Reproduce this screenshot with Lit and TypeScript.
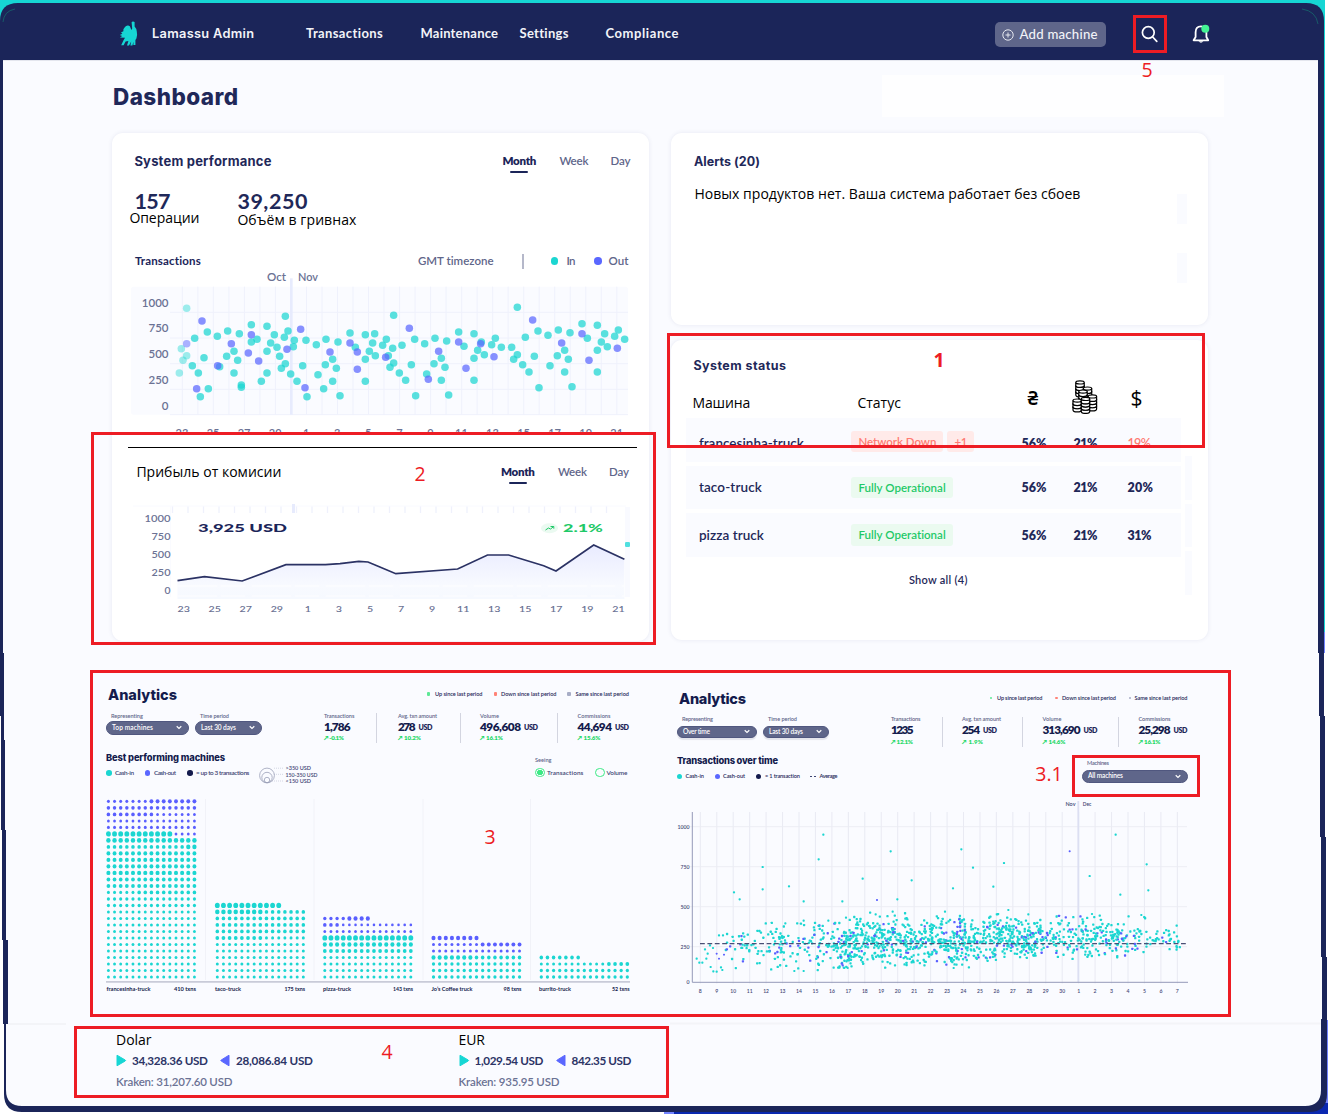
import { LitElement, html, svg, css } from 'lit';
import { customElement, property } from 'lit/decorators.js';

/* Text label whose letter spacing is tuned so that it fills a given width. */
@customElement('fit-text')
class FitText extends LitElement {
  @property() text = '';
  @property({ type: Number }) w = 0;
  static styles = css`
    :host { display: block; line-height: 1.2; white-space: nowrap; }
    span { display: inline-block; }
  `;
  render() { return html`<span>${this.text}</span>`; }
  updated() {
    const s = this.renderRoot.querySelector('span') as HTMLElement;
    this.style.width = this.w + 'px';
    s.style.letterSpacing = '0px';
    const n = this.text.length;
    const gap = (this.w - s.getBoundingClientRect().width) / Math.max(1, n - 1);
    s.style.letterSpacing = gap.toFixed(3) + 'px';
  }
}
const t = (text: string, w: number, cls = '') => html`<fit-text class=${cls} .w=${w} .text=${text}></fit-text>`;

const st = (x: number, y: number, w: number, text: string, size: number, cls: string) =>
  svg`<text x=${x} y=${y} class=${cls} font-size=${size} textLength=${w} lengthAdjust="spacingAndGlyphs">${text}</text>`;

const shared = css`
  :host { display: block; font-family: Lato, "Open Sans", sans-serif; color: #1f2859; }
  * { box-sizing: border-box; }
  svg { display: block; }
  .cyr { font-family: "Open Sans", "Noto Sans", sans-serif; color: #000; font-size: 14px; }
  .row { display: grid; align-items: center; justify-content: start; }
  .title { font-family: Inter, Lato, sans-serif; font-weight: 700; }
`;

const days = ['23', '25', '27', '29', '1', '3', '5', '7', '9', '11', '13', '15', '17', '19', '21'];

/* ---------- Period tabs ---------- */
@customElement('period-tabs')
class PeriodTabs extends LitElement {
  static styles = [shared, css`
    .tabs { display: grid; grid-template-columns: 57px 51px 20px; font-size: 11.5px; font-weight: 600; color: #5f668a; }
    .on { color: #1b2559; font-weight: 800; position: relative; }
    .on::after { content: ''; position: absolute; left: 8px; top: 16.5px; width: 18px; height: 2px; border-radius: 1px; background: #1b2559; }
  `];
  render() { return html`<div class="tabs">${t('Month', 34, 'on')}${t('Week', 29)}${t('Day', 20)}</div>`; }
}

/* ---------- Transactions scatter; point units are thirds of a pixel ---------- */
const pIn = [[314,640],[352,621],[382,634],[413,618],[448,626],[342,698],[307,722],[325,744],[331,815],[355,791],[389,725],[410,694],[432,679],[443,706],[432,744],[454,780],[454,787],[484,599],[484,651],[501,643],[531,604],[553,629],[542,654],[561,667],[531,679],[569,694],[586,716],[574,730],[602,747],[531,744],[514,769],[586,574],[594,618],[583,637],[613,646],[610,665],[648,646],[679,659],[708,643],[744,651],[638,722],[621,769],[651,815],[684,749],[706,719],[728,703],[739,730],[728,769],[701,791],[750,812],[780,624],[796,667],[826,629],[854,626],[848,654],[838,679],[826,703],[856,692],[826,769],
[878,661],[889,643],[911,571],[908,670],[936,661],[895,692],[911,714],[900,727],[928,744],[947,766],[977,812],[964,719],[974,643],[1004,656],[1035,640],[1070,648],[1054,700],[1032,716],[1065,727],[1010,747],[1054,766],[1076,810],[1106,621],[1122,664],[1152,626],[1174,651],[1163,676],[1183,689],[1152,700],[1152,766],[1205,659],[1216,640],[1234,667],[1265,667],[1282,689],[1271,703],[1298,719],[1317,741],[1347,788],[1282,547],[1306,637],[1344,618],[1374,631],[1333,694],[1380,722],[1405,615],[1440,623],[1424,676],[1402,692],[1435,703],[1424,741],[1446,785],[1476,596],[1492,640],[1522,601],[1544,626],[1534,651],[1552,665],[1522,676],[1522,741],[1574,634],[1585,615],[1604,643]];
const pFade = [[290,550],[274,671],[290,692],[279,706],[268,744]];
const pOut = [[336,588],[424,656],[383,722],[320,791],[475,684],[484,629],[506,708],[591,673],[632,613],[645,788],[720,681],[780,654],[802,681],[802,733],[958,610],[1046,679],[887,697],[1015,763],[1106,651],[1172,656],[1128,730],[1212,695],[1328,585],[1415,654],[1476,626],[1497,706],[1582,670]];

@customElement('performance-card')
class PerformanceCard extends LitElement {
  static styles = [shared, css`
    .card { width: 537px; height: 508px; background: #fff; border-radius: 11px; box-shadow: 0 0 4px rgba(60,70,130,.1); }
    .head { height: 56px; padding-left: 22px; grid-template-columns: 368px 128px; }
    .title { font-size: 13px; padding-top: 1px; }
    .nums { margin-top: -1px; height: 27px; padding-left: 22px; grid-template-columns: 103px 70px; font-size: 21.5px; font-weight: 700; }
    .labs { margin-top: -7px; height: 20px; padding-left: 17px; grid-template-columns: 108px 119px; }
    .labs :nth-child(2) { padding-top: 4px; }
    .legend { margin-top: 23px; height: 20px; padding-left: 22.5px; grid-template-columns: 283px 104px 29px 15.5px 28px 14px 21px; font-size: 11.5px; color: #5f668a; font-weight: 600; }
    .legend .b { color: #1b2559; font-weight: 700; }
    .bar { width: 2px; height: 15px; background: #b5b8ca; }
    .dot { width: 7.5px; height: 7.5px; border-radius: 50%; background: #1bd6d1; }
    .out { background: #5a67ff; }
    hr { margin: 12px 0 0 16px; width: 509px; height: 1px; border: 0; background: #000; }
    .head2 { height: 48px; padding-left: 24px; grid-template-columns: 364.5px 128px; }
    .ax { fill: #6b7294; font-family: Lato, sans-serif; font-weight: 600; }
    .axe { text-anchor: end; }
    .axm { text-anchor: middle; }
    .bold { fill: #1b2559; font-weight: 900; font-family: Lato, sans-serif; }
    .up { fill: #1fc968; font-weight: 900; font-family: Lato, sans-serif; }
  `];
  render() {
    const dots = (a: number[][], c: string, o: number) => a.map(p => svg`<circle cx=${p[0]} cy=${p[1]} r="11.3" fill=${c} opacity=${o}/>`);
    return html`<div class="card">
      <div class="row head">${t('System performance', 137, 'title')}<period-tabs></period-tabs></div>
      <div class="row nums">${t('157', 36)}${t('39,250', 70)}</div>
      <div class="row labs">${t('Операции', 70, 'cyr')}${t('Объём в гривнах', 119, 'cyr')}</div>
      <div class="row legend">${t('Transactions', 66, 'b')}${t('GMT timezone', 76)}<i class="bar"></i><i class="dot"></i>${t('In', 9)}<i class="dot out"></i>${t('Out', 20)}</div>
      <svg width="537" height="164" viewBox="112 271 537 164">
        <g transform="translate(90 125) scale(.33333)">
          <rect x="123" y="485" width="1491" height="384" rx="8" fill="#fafbff"/>
          ${Array.from({ length: 29 }, (_, i) => svg`<path d="M${277 + i * 46.55} 485V869" stroke="#eff1fc" stroke-width="3"/>`)}
          ${[562, 639, 716, 793, 869].map(y => svg`<path d="M240 ${y}H1614" stroke="#eff1fc" stroke-width="3"/>`)}
          <path d="M604 460V869" stroke="#e7ebfd" stroke-width="8"/>
          ${dots(pFade, '#1bd6d1', .42)}${dots([[290, 656]], '#5a67ff', .5)}
          ${dots(pIn, '#1bd6d1', .72)}${dots(pOut, '#5a67ff', .72)}
        </g>
        ${st(267, 281, 19, 'Oct', 11, 'ax')}${st(298, 281, 20, 'Nov', 11, 'ax')}
        ${['1000', '750', '500', '250', '0'].map((v, i) => svg`<text class="ax axe" x="168.5" y=${306.5 + i * 25.8} font-size="11.5">${v}</text>`)}
        ${days.map((v, i) => svg`<text class="ax axm" x=${182 + i * 31.05} y="436.5" font-size="11">${v}</text>`)}
      </svg>
      <hr>
      <div class="row head2">${t('Прибыль от комисии', 145, 'cyr')}<period-tabs></period-tabs></div>
      <svg width="537" height="124" viewBox="112 496 537 124">
        <defs><linearGradient id="g" x1="0" y1="0" x2="0" y2="1"><stop offset="0" stop-color="#e9ebff"/><stop offset=".75" stop-color="#f8faff"/><stop offset="1" stop-color="#f6f9ff"/></linearGradient></defs>
        <path d="M133 506H626" stroke="#f9faff"/>
        ${Array.from({ length: 29 }, (_, i) => svg`<path d="M${172.5 + i * 15.5} 506.5V513" stroke="#eff1fc" stroke-width="1.3"/>`)}
        <path d="M293.5 504V513" stroke="#e7ebfd" stroke-width="3"/>
        <path d="M170.5 506V597" stroke="#fafbff" stroke-width="1"/>
        <path d="M625 507h5v90h-5z" fill="#f9faff"/>
        <path fill="url(#g)" d="M177.5 580.7 204.5 576.7 242.2 581 285.9 564.7H325.5L340 563.7 358.8 561.3 368 562 379.9 567 395.8 573.7 457.6 569 487.5 555H508.6L543.7 565.7 556 571 593.7 545 624.4 559.3V599H177.5Z"/>
        <path d="M177.5 586H624M177.5 596H624" stroke="#fff" stroke-width="1.2" opacity=".8" stroke-dasharray="40 3 25 6"/>
        <path fill="none" stroke="#2b3264" stroke-width="1.7" d="M177.5 580.7 204.5 576.7 242.2 581 285.9 564.7H325.5L340 563.7 358.8 561.3 368 562 379.9 567 395.8 573.7 457.6 569 487.5 555H508.6L543.7 565.7 556 571 593.7 545 624.4 559.3"/>
        ${[['1000', 26], ['750', 19], ['500', 19], ['250', 19], ['0', 6]].map((v, i) => st(170.5 - (v[1] as number), 521.5 + i * 18, v[1] as number, v[0] as string, 8.5, 'ax'))}
        ${days.map((v, i) => st(183.7 + i * 31.05 - v.length * 3.1, 612.2, v.length * 6.2, v, 8, 'ax'))}
        ${st(198, 532, 89, '3,925 USD', 10.5, 'bold')}
        ${st(563, 532, 40, '2.1%', 10.5, 'up')}
        <ellipse cx="549.5" cy="528.3" rx="8.5" ry="5" fill="#ebfaf1"/>
        <path d="M545.5 530l3-2 2 1 3-2.3M550.5 526.5h3.3v2.2" fill="none" stroke="#1fc968" stroke-width="1"/>
        <rect x="625" y="542" width="5" height="5" rx="1.2" fill="#50dfdf"/>
      </svg>
    </div>`;
  }
}

/* ---------- Alerts ---------- */
@customElement('alerts-card')
class AlertsCard extends LitElement {
  static styles = [shared, css`
    .card { display: grid; grid-template-columns: 483.5px 10px; width: 537px; height: 192px; background: #fff; border-radius: 11px; padding: 20.5px 0 0 22.5px; box-shadow: 0 0 4px rgba(60,70,130,.1); align-content: start; }
    .title { font-size: 12.5px; }
    .msg { margin-top: 17.5px; font-size: 14px; margin-left: .5px; }
    .stubs { display: grid; gap: 29px; margin-top: 40px; }
    .stubs i { height: 30px; background: #fafbff; }
  `];
  render() {
    return html`<div class="card"><div>${t('Alerts (20)', 66, 'title')}${t('Новых продуктов нет. Ваша система работает без сбоев', 386, 'cyr msg')}</div><div class="stubs"><i></i><i></i></div></div>`;
  }
}

/* ---------- System status ---------- */
@customElement('status-card')
class StatusCard extends LitElement {
  static styles = [shared, css`
    .card { width: 537px; height: 300px; background: #fff; border-radius: 11px; box-shadow: 0 0 4px rgba(60,70,130,.1); padding-top: 17px; }
    .title { font-size: 12.5px; margin-left: 22px; height: 15px; padding-top: .5px; }
    .heads { grid-template-columns: 165px 170px 45px 58px 20px; padding-left: 21px; height: 46px; }
    .heads .cyr { padding-top: 16px; }
    .cur { font: 21px "Open Sans", "Noto Sans", sans-serif; color: #000; line-height: 24px; padding-top: 6px; }
    .cur.h { font-weight: 600; font-size: 19px; padding-top: 5px; }
    .heads svg { margin-top: 4px; }
    .body { display: grid; grid-template-columns: 495px 7px; column-gap: 4px; padding-left: 15px; }
    .list { display: grid; gap: 4px; }
    .item { grid-template-columns: 153px 170px 52px 54px 30px; height: 43.5px; padding-left: 12.5px; background: #fafbff; font-size: 13.5px; font-weight: 600; }
    .item .n { font-size: 12.5px; font-weight: 800; padding-top: 1px; margin-left: -.5px; }
    .item .n.low { color: #ff7a72; font-weight: 600; }
    .item.first { padding-top: 7px; }
    .chips { display: flex; gap: 4px; margin-left: -.5px; }
    .first .chips { margin-top: -4px; }
    .chip { height: 21.5px; border-radius: 3px; padding: 4px 7px 0; font-size: 11.5px; background: #ebfaf0; color: #1fc968; }
    .bad { background: #ffeae9; color: #ff7a72; }
    .stubs { display: grid; gap: 4px; margin-top: 38px; align-content: start; height: 0; }
    .stubs i { height: 43.5px; background: #fafbff; }
    .all { font-size: 11px; font-weight: 600; margin: 16.5px 0 0 237.5px; }
  `];
  render() {
    const ok = html`<div class="chips"><div class="chip">${t('Fully Operational', 87.5)}</div></div>`;
    const coin = (x: number, y: number) => svg`<path d="M${x - 4.2} ${y}v3c0 2.6 8.4 2.6 8.4 0v-3" fill="#fff"/><ellipse cx=${x} cy=${y} rx="4.2" ry="1.6" fill="#fff"/>`;
    const stack = (x: number, base: number, n: number) => Array.from({ length: n }, (_, i) => coin(x, base - i * 3.2));
    return html`<div class="card">
      ${t('System status', 92.5, 'title')}
      <div class="row heads">${t('Машина', 58, 'cyr')}${t('Статус', 43.5, 'cyr')}<span class="cur h">₴</span>
        <svg width="26" height="34" viewBox="0 0 26 34" fill="none" stroke="#000" stroke-width="1.2">
          ${stack(8, 12, 4)}${stack(15.5, 15, 3)}${stack(11, 18, 3)}${stack(20.4, 26, 4)}${stack(5.2, 27, 3)}${stack(13.5, 28.5, 4)}
        </svg><span class="cur">$</span></div>
      <div class="body"><div class="list">
        <div class="row item first">${t('francesinha-truck', 105)}
          <div class="chips"><div class="chip bad">${t('Network Down', 78)}</div><div class="chip bad">${t('+1', 13)}</div></div>
          ${t('56%', 25, 'n')}${t('21%', 24, 'n')}${t('19%', 23.5, 'n low')}</div>
        <div class="row item">${t('taco-truck', 63)}${ok}${t('56%', 25, 'n')}${t('21%', 24, 'n')}${t('20%', 25.5, 'n')}</div>
        <div class="row item">${t('pizza truck', 65)}${ok}${t('56%', 25, 'n')}${t('21%', 24, 'n')}${t('31%', 24, 'n')}</div>
      </div><div class="stubs"><i></i><i></i><i></i></div></div>
      ${t('Show all (4)', 58.5, 'all')}
    </div>`;
  }
}

/* ---------- Analytics ---------- */
const analyticsCss = css`
  .title { font-size: 14.5px; font-weight: 800; color: #141b4d; padding-top: 1px; }
  .tiny { font-size: 5.6px; font-weight: 600; }
  .lab { font-size: 5.6px; color: #5f668a; font-weight: 600; }
  .pill { border-radius: 8px; background: #5f668a; border: 1px solid #50577f; color: #fff; font-size: 6.6px; display: flex; align-items: center; justify-content: space-between; padding: 0 6px 0 5px; font-weight: 600; }
  .big { font-size: 11.8px; font-weight: 800; color: #141b4d; }
  .usd { font-size: 7.2px; font-weight: 800; padding-top: 2.5px; }
  .money { display: flex; gap: 3px; align-items: center; height: 13px; }
  .up { font-size: 6.2px; color: #1fd968; font-weight: 800; }
  .stat { display: grid; grid-template-rows: 9px 13px 9px; align-items: center; }
  .sep { width: 1.3px; height: 30px; background: #d3d5e0; }
  .h2 { font-family: Inter, Lato, sans-serif; font-size: 9.3px; font-weight: 800; color: #141b4d; }
  .sq { width: 3.5px; height: 3.5px; background: #5ee896; border-radius: 1px; }
  .sq.r { background: #ff8377; } .sq.g { background: #a7adc6; }
  .dot { width: 5.6px; height: 5.6px; border-radius: 50%; background: #1bd6d1; }
  .dot.p { background: #5a67ff; } .dot.k { background: #141b4d; }
  .small { font-size: 6.4px; font-weight: 600; color: #3d4473; }
  .c { fill: #141b4d; font-family: Lato, sans-serif; font-weight: 700; }
  .ax { fill: #3d4473; font-family: Lato, sans-serif; font-weight: 600; }
`;
const chevron = html`<svg width="6" height="5" viewBox="0 0 6 5"><path d="M.7 1.2 3 3.4 5.3 1.2" fill="none" stroke="#fff" stroke-width="1.2"/></svg>`;
const stat = (l: string, lw: number, v: string, vw: number, usd: boolean, up: string, uw: number) => html`
  <div class="stat">${t(l, lw, 'lab')}<div class="money">${t(v, vw, 'big')}${usd ? t('USD', 14, 'usd') : ''}</div>${t('↗ ' + up, uw, 'up')}</div>`;

type Run = [number, string, number][];
const C = '#1bd6d1', P = '#5a5fff';
const rep = (n: number, r: Run): Run[] => Array.from({ length: n }, () => r);
/* Each bar lists its rows from the top; a row is a list of [count, colour, radius] runs. */
const bars: { x: number; rows: Run[] }[] = [
  { x: 108.4, rows: [[[7, P, 1.6], [8, P, 2.1]], [[15, P, 1.85]], [[8, P, 1.9], [7, P, 1.5]], [[15, P, 1.5]], [[15, P, 1.6]], [[11, C, 2.6], [4, P, 1.5]], [[15, C, 2.4]], [[13, C, 1.9], [2, C, 2.3]], ...rep(3, [[15, C, 2.1]]), [[15, C, 2.2]], ...rep(2, [[15, C, 2]]), [[5, C, 1.6], [10, C, 1.9]], ...rep(2, [[15, C, 1.7]]), ...rep(11, [[15, C, 1.55]])] },
  { x: 217.3, rows: [[[11, C, 2.6]], [[8, C, 2.4], [7, C, 1.9]], ...rep(3, [[15, C, 1.9]]), [[8, C, 2], [7, C, 1.6]], ...rep(6, [[15, C, 1.6]])] },
  { x: 324.8, rows: [[[4, P, 1.8], [4, P, 2.2]], [[3, P, 1.9], [12, P, 1.4]], [[15, P, 1.5]], [[15, C, 2.6]], [[15, C, 2.2]], [[15, C, 2]], ...rep(4, [[15, C, 1.6]])] },
  { x: 433.5, rows: [[[8, P, 2.2]], [[8, P, 1.6], [7, P, 2.1]], [[15, P, 1.6]], [[7, C, 2.2], [8, C, 1.9]], ...rep(3, [[15, C, 1.75]])] },
  { x: 541.3, rows: [[[7, C, 1.9]], [[11, C, 1.6], [4, C, 2]], ...rep(2, [[15, C, 1.75]])] },
];

@customElement('machines-panel')
class MachinesPanel extends LitElement {
  static styles = [shared, analyticsCss, css`
    .top { height: 20px; padding-left: 2px; grid-template-columns: 318.5px 8.5px 58.5px 7.5px 66px 8.5px 54px; }
    .filters { margin-top: 6px; height: 34px; align-items: start; grid-template-columns: 89px 129px 52px 22px 61.5px 20.5px 77px 20.5px 55px; }
    .filters .lab { padding: 2.6px 0 0 5px; height: 11px; }
    .filters .stat .lab { padding: 0; height: auto; }
    .stat { padding-top: 1.5px; }
    .sep { margin-top: 3px; }
    .pill { height: 13.5px; }
    .a { width: 83px; } .b { width: 66.5px; }
    .mid { margin-top: 3px; height: 43px; display: grid; grid-template-columns: 153px 276px 95px; align-items: start; }
    .h2 { padding-top: 4.6px; height: 19px; }
    .leg { height: 14px; grid-template-columns: 9px 29.5px 9.5px 33px 9px 53px; }
    .sizes { padding-top: 15px; }
    .see { padding-top: 9.5px; }
    .opts { height: 15px; margin-top: 2px; grid-template-columns: 12px 48px 11.5px 22px; }
    .radio { width: 9.5px; height: 9.5px; border: 1.6px solid #3cea85; border-radius: 50%; background: radial-gradient(#3cea85 0 2.7px, transparent 3.2px); }
    .radio.o { background: none; }
  `];
  render() {
    const lab = (x: number, w: number, s: string) => st(x, 991.2, w, s, 5.6, 'c');
    return html`
      <div class="row top">${t('Analytics', 69, 'title')}<i class="sq"></i>${t('Up since last period', 47.5, 'tiny')}<i class="sq r"></i>${t('Down since last period', 55.5, 'tiny')}<i class="sq g"></i>${t('Same since last period', 53.5, 'tiny')}</div>
      <div class="row filters">
        <div>${t('Representing', 32, 'lab')}<div class="pill a">${t('Top machines', 41)}${chevron}</div></div>
        <div>${t('Time period', 29, 'lab')}<div class="pill b">${t('Last 30 days', 35)}${chevron}</div></div>
        ${stat('Transactions', 30.5, '1,786', 26.5, false, '-0.1%', 20)}<i class="sep"></i>
        ${stat('Avg. txn amount', 39, '278', 17.5, true, '10.2%', 23)}<i class="sep"></i>
        ${stat('Volume', 19, '496,608', 41, true, '16.1%', 23)}<i class="sep"></i>
        ${stat('Commissions', 33, '44,694', 34.5, true, '15.6%', 23)}
      </div>
      <div class="mid">
        <div>${t('Best performing machines', 119, 'h2')}
          <div class="row leg"><i class="dot"></i>${t('Cash-in', 19, 'small')}<i class="dot p"></i>${t('Cash-out', 22, 'small')}<i class="dot k"></i>${t('= up to 3 transactions', 53.5, 'small')}</div></div>
        <svg class="sizes" width="70" height="38" viewBox="259 762 70 23" fill="none" stroke="#9a9fb8" stroke-width=".8">
          <circle cx="267" cy="775.5" r="7.4"/><circle cx="267" cy="777.5" r="5.2"/><circle cx="267" cy="780" r="2.7"/>
          <path d="M274 768.2h9M274 774.3h9M270 781h13" stroke-dasharray="1 1" opacity=".5"/>
          <g stroke="none">${st(285.5, 770.3, 25.5, '>350 USD', 5.6, 'ax')}${st(285.5, 776.6, 32, '150-350 USD', 5.6, 'ax')}${st(285.5, 782.8, 25.5, '<150 USD', 5.6, 'ax')}</g>
        </svg>
        <div class="see">${t('Seeing', 16.5, 'lab')}<div class="row opts"><i class="radio"></i>${t('Transactions', 36.5, 'small')}<i class="radio o"></i>${t('Volume', 21, 'small')}</div></div>
      </div>
      <svg width="530" height="210" viewBox="106 790 530 210">
        ${[205.5, 314, 423, 530.5].map(x => svg`<path d="M${x} 799V980" stroke="#f1f2f8"/>`)}
        ${bars.map(b => b.rows.map((r, ri) => {
          const y = 977 - (b.rows.length - 1 - ri) * 6.505; let k = 0;
          return r.map(([n, c, rad]) => Array.from({ length: n }, () => svg`<ellipse cx=${b.x + k++ * 6.145} cy=${y} rx=${rad * .93} ry=${rad} fill=${c}/>`));
        }))}
        <path d="M106 981.8H630" stroke="#c9cbd8" stroke-width="1.7"/>
        ${lab(106.5, 44, 'francesinha-truck')}${lab(174, 22, '410 txns')}${lab(215, 26, 'taco-truck')}${lab(284.5, 20.5, '175 txns')}${lab(323, 28, 'pizza-truck')}${lab(393, 20, '143 txns')}${lab(431.5, 41, 'Jo’s Coffee truck')}${lab(503.5, 18, '98 txns')}${lab(539, 32, 'burrito-truck')}${lab(612, 17.5, '52 txns')}
      </svg>`;
  }
}

const far = [[207,679],[224,700],[293,603],[293,670],[372,661],[416,706],[461,580],[475,506],[532,706],[593,638],[677,556],[697,700],[740,643],[864,667],[889,550],[924,605],[985,662],[1017,591],[1030,732],[1274,630],[1352,506],[1366,686],[1445,595],[1450,673],[683,737],[840,737],[95,878],[103,890],[112,890],[124,878],[137,903],[145,916],[155,917],[168,904],[172,912],[128,863],[120,850],[135,838],[144,846],[162,808],[174,808],[416,764],[490,764],[632,745],[361,772],[388,915],[416,915],[538,906],[548,906],[543,755],[866,906],[1090,745],[1281,744],[1429,747]];
const farOut = [[636, 702], [1214, 556], [155, 863], [162, 878], [177, 866]];
function cloud() {
  let s = 91;
  const rnd = () => { s = (s * 1103515245 + 12345) % 2147483648; return s / 2147483648; };
  const out: { x: number; y: number; p: boolean }[] = [];
  while (out.length < 1300) {
    const x = 180 + rnd() * 1370;
    const dens = x < 300 ? .32 : x < 500 ? .46 : x < 1130 ? 1 : x < 1430 ? .6 : .2;
    if (rnd() > dens) continue;
    const g = rnd() + rnd() - 1;
    const mid = x < 300 ? 843 : x < 550 ? 838 : x < 1000 ? 824 : 814;
    const amp = x < 300 ? 66 : x < 550 ? 84 : x < 1000 ? 90 : x < 1450 ? 70 : 52;
    out.push({ x, y: mid + g * amp, p: rnd() < .1 });
  }
  return out;
}

@customElement('overtime-panel')
class OvertimePanel extends LitElement {
  static styles = [shared, analyticsCss, css`
    .top { margin-top: 4px; height: 20px; padding-left: 2px; grid-template-columns: 310.5px 7.5px 58px 7px 66.5px 6px 53px; }
    .top .sq { width: 2.6px; height: 2.6px; }
    .filters { margin-top: 5.5px; height: 34px; align-items: start; grid-template-columns: 86px 128px 51px 20px 60px 20.5px 75px 21px 50px; }
    .filters .lab { padding: 2.5px 0 0 5px; height: 12px; }
    .filters .stat .lab { padding: 0; height: auto; }
    .stat { padding-top: 1.5px; }
    .sep { margin-top: 3px; }
    .pill { height: 12px; box-shadow: 0 2px 1px #e3e4ec; }
    .a { width: 79.5px; } .b { width: 65.5px; }
    .mid { margin-top: 3px; height: 40px; display: grid; grid-template-columns: 405px 106px; }
    .h2 { padding-top: 4px; height: 20px; }
    .leg { height: 12.5px; grid-template-columns: 8.5px 29px 8.5px 33px 9px 44.5px 10px 18px; }
    .leg .dot { width: 5px; height: 5px; }
    .dash { width: 6px; height: 1px; background: linear-gradient(90deg, #3d4473 40%, transparent 40% 60%, #3d4473 60%); }
    .mach { padding-top: 9.5px; }
    .mach .lab { padding-left: 5px; height: 9.5px; }
    .mach .pill { height: 13px; box-shadow: none; }
  `];
  render() {
    const ticks = [8, 9, 10, 11, 12, 13, 14, 15, 16, 17, 18, 19, 20, 21, 22, 23, 24, 25, 26, 27, 28, 29, 30, 1, 2, 3, 4, 5, 6, 7];
    return html`
      <div class="row top">${t('Analytics', 67, 'title')}<i class="sq"></i>${t('Up since last period', 45.5, 'tiny')}<i class="sq r"></i>${t('Down since last period', 54, 'tiny')}<i class="sq g"></i>${t('Same since last period', 53, 'tiny')}</div>
      <div class="row filters">
        <div>${t('Representing', 31, 'lab')}<div class="pill a">${t('Over time', 27)}${chevron}</div></div>
        <div>${t('Time period', 29, 'lab')}<div class="pill b">${t('Last 30 days', 34)}${chevron}</div></div>
        ${stat('Transactions', 29.5, '1235', 22.5, false, '12.1%', 22)}<i class="sep"></i>
        ${stat('Avg. txn amount', 39, '254', 18, true, '1.9%', 21)}<i class="sep"></i>
        ${stat('Volume', 19, '313,690', 38, true, '14.6%', 23)}<i class="sep"></i>
        ${stat('Commissions', 32, '25,298', 32, true, '16.1%', 22)}
      </div>
      <div class="mid">
        <div>${t('Transactions over time', 101, 'h2')}
          <div class="row leg"><i class="dot"></i>${t('Cash-in', 18.5, 'tiny')}<i class="dot p"></i>${t('Cash-out', 22, 'tiny')}<i class="dot k"></i>${t('= 1 transaction', 35, 'tiny')}<i class="dash"></i>${t('Average', 18, 'tiny')}</div></div>
        <div class="mach">${t('Machines', 22, 'lab')}<div class="pill">${t('All machines', 35)}${chevron}</div></div>
      </div>
      <svg width="530" height="210" viewBox="677 790 530 210">
        ${ticks.map((v, i) => svg`<path d="M${700.3 + i * 16.45} 811V982.5" stroke="#e6e8f2" stroke-width=".9"/>${st(700.3 + i * 16.45 - (v > 9 ? 2.9 : 1.5), 991.7, v > 9 ? 5.8 : 3, String(v), 5.6, 'ax')}`)}
        ${[825.7, 865.7, 905.7, 945.7].map(y => svg`<path d="M690 ${y}H1187" stroke="#ebecf4" stroke-width=".9"/>`)}
        <path d="M1078.3 800V981" stroke="#dcdff2" stroke-width="1.8"/>
        <path d="M692.3 811V981.3H1188" fill="none" stroke="#9499b8" stroke-width="1"/>
        ${[['1000', 827.8, 12], ['750', 867.8, 9], ['500', 907.8, 9], ['250', 947.8, 9], ['0', 983, 3]].map(a => st(689.5 - (a[2] as number), a[1] as number, a[2] as number, a[0] as string, 5.8, 'ax'))}
        ${st(1065.5, 805, 10, 'Nov', 5.6, 'ax')}${st(1082.8, 805, 8.5, 'Dec', 5.6, 'ax')}
        <g transform="translate(665 665) scale(.33333)">
          ${far.map(p => svg`<rect x=${p[0] - 3.3} y=${p[1] - 3.3} width="6.6" height="6.6" rx="2.5" fill=${C}/>`)}
          ${farOut.map(p => svg`<rect x=${p[0] - 3} y=${p[1] - 3} width="6" height="6" rx="2.5" fill=${P}/>`)}
          ${cloud().map(p => svg`<rect x=${p.x - 3.4} y=${p.y - 3.4} width="6.9" height="6.9" rx="2" fill=${p.p ? P : C}/>`)}
        </g>
        <path d="M700 942.7H1187" stroke="#4a4f75" stroke-width="1.2" stroke-dasharray="4.8 2.6"/>
      </svg>`;
  }
}

/* ---------- Page ---------- */
@customElement('app-root')
class AppRoot extends LitElement {
  static styles = [shared, css`
    :host { display: block; position: relative; width: 1340px; height: 1120px; overflow: hidden; background: #fff; }
    .frame { position: absolute; inset: 0; z-index: 0; }
    .page { position: relative; z-index: 1; height: 1120px; }
    header { height: 60px; padding: 7px 0 0 119px; display: grid; align-items: center; grid-template-columns: 33px 154px 114.5px 99px 86px 389px 146px 51px 20px; color: #f2f3f8; font-size: 13px; font-weight: 700; }
    .brand { font-family: Inter, Lato, sans-serif; font-size: 12.8px; font-weight: 600; } .low { padding-top: 1.5px; }
    .add { display: flex; align-items: center; gap: 6px; width: 111.5px; height: 25.5px; margin-top: 2px; padding-left: 7px; border-radius: 5px; background: #5f668a; font-size: 13.2px; font-weight: 500; }
    .titlebar { height: 73px; display: grid; grid-template-columns: 769px 342px; padding-left: 113px; align-items: start; }
    .titlebar h1 { margin: 23px 0 0; font-family: Inter, Lato, sans-serif; font-size: 22.5px; font-weight: 800; line-height: 1.2; }
    .blank { margin-top: 15px; height: 42px; background: #fefeff; }
    .cards { display: grid; grid-template-columns: 537px 537px; column-gap: 22px; padding-left: 112.4px; height: 508px; }
    .right { display: grid; grid-template-rows: 192px 300px; row-gap: 15px; }
    .analytics { display: grid; grid-template-columns: 571px 530px; padding: 43px 0 0 106px; height: 382px; align-items: start; }
    footer { padding: 9px 0 0 116px; display: grid; grid-template-columns: 342.5px 200px; font-size: 11.7px; font-weight: 700; }
    footer .cyr { font-size: 14px; font-weight: 400; height: 19.5px; }
    .rate { display: grid; align-items: center; height: 18px; color: #2c3466; }
    .r1 { grid-template-columns: 16px 88px 16px 78px; } .r2 { grid-template-columns: 16px 81px 16px 60px; }
    .kraken { color: #6b7294; font-weight: 600; font-size: 11.5px; margin-top: 5px; }
    .note { position: absolute; z-index: 2; border: 3px solid #ed1c24; }
    .n1 { left: 667px; top: 333px; width: 538px; height: 115px; }
    .n2 { left: 91px; top: 432px; width: 565px; height: 213px; }
    .n3 { left: 90px; top: 670px; width: 1141px; height: 347px; }
    .n31 { left: 1072px; top: 755px; width: 128px; height: 42px; }
    .n4 { left: 74px; top: 1026px; width: 595px; height: 72px; }
    .n5 { left: 1133px; top: 15px; width: 34px; height: 38px; }
    .num { position: absolute; z-index: 2; color: #ed1c24; font: 19.5px/24px "Open Sans", "Noto Sans", sans-serif; width: 40px; text-align: center; }
    .m1 { left: 919px; top: 348px; font-weight: 700; } .m2 { left: 400px; top: 462px; } .m3 { left: 470px; top: 825px; }
    .m31 { left: 1029px; top: 762px; } .m4 { left: 367px; top: 1040px; } .m5 { left: 1127px; top: 58px; }
  `];
  render() {
    const tri = (c: string, flip: boolean) => html`<svg width="11" height="13" viewBox="0 0 11 13"><path d=${flip ? 'M9 1.2V11.8L1.2 7Q.4 6.5 1.2 6Z' : 'M1 1.2V11.8L9.2 7Q10 6.5 9.2 6Z'} fill=${c} stroke=${c} stroke-linejoin="round"/></svg>`;
    return html`
      <svg class="frame" width="1340" height="1120">
        <path d="M0 0H1325V632H0Z" fill="#16d6d4"/>
        <path d="M1300 632H1325V653H1300Z" fill="#7283ff"/>
        <path d="M1310 1020H1328V1103H1310Z" fill="#7283ff"/>
        <path d="M664 1105H674V1114H664Z" fill="#7283ff"/>
        <path d="M674 1103H1328V1114H674Z" fill="#0a28b0"/>
        <path d="M0 21Q0 3 18 3H1306Q1324 3 1324 21V653H0Z" fill="#1b2559"/>
        <path d="M1300 653H1324V716H1325V837H1326V957H1327V1019H1327V1094Q1327 1112 1309 1112H22Q4 1112 4 1094V1024H3V940H2V830H1V716H0V653Z" fill="#1b2559"/>
        <path d="M3 60H1318V653H1319V716H1320V837H1321V957H1322V1019H1321V1090Q1321 1106 1305 1106H22Q6 1106 6 1090V1024H8V940H6V830H5V740H4V653H3Z" fill="#fafbff"/>
        <path d="M3 22Q4 11 15 9" fill="none" stroke="#16706f" opacity=".7"/><path d="M1302 9Q1316 11 1318 24" fill="none" stroke="#16706f" opacity=".7"/>
        <path d="M8 1024H66M670 1023.5H1321" stroke="#f3f4f8" stroke-width="2"/>
        <path d="M3 60.5H1318" stroke="#e4e6ee"/>
      </svg>
      <div class="page">
        <header>
          <svg width="20" height="26" viewBox="0 0 20 26" fill="#16d6d4"><path d="M12.6 1.2Q13 .3 14.2.4L15.6 1V5.5Q17.6 7.5 17.8 10.5 18.6 14 17.4 17.5L16.4 19V24H14.4V20.8L13.4 24.4H11.4L12.2 20.4 10 24.4H8L9.4 20 6.6 20.6 4.6 24.2H2.2L4.4 19.6 6 16.8 1 16.4 3.2 15 .8 14 3.4 12.8 2 11.4 4.4 10.2Q3.8 8 5.6 6.4 7 4.4 9.2 4.6 11.2 4.8 11.8 7.4L12.4 9 13.2 7.6Z"/></svg>
          ${t('Lamassu Admin', 102, 'brand')}${t('Transactions', 77)}${t('Maintenance', 77.5)}${t('Settings', 48.5, 'low')}${t('Compliance', 73, 'low')}
          <div class="add"><svg width="12" height="12" viewBox="0 0 12 12" fill="none" stroke="#e6e8f0"><circle cx="6" cy="6" r="5.2"/><path d="M6 3.5V8.5M3.5 6H8.5"/></svg>${t('Add machine', 78)}</div>
          <svg width="18" height="18" viewBox="0 0 18 18" fill="none" stroke="#fff" stroke-width="1.7" stroke-linecap="round"><circle cx="7.3" cy="7.5" r="5.9"/><path d="M11.7 12 15.8 16.3"/></svg>
          <svg width="19" height="20" viewBox="0 0 19 20"><path d="M1.6 16.3H16.2L14.4 13V8.3Q14.4 2.3 9 2.3T3.6 8.3V13Z" fill="none" stroke="#fff" stroke-width="1.8" stroke-linejoin="round"/><path d="M6.5 17.3Q9 20 11.4 17.3Z" fill="#fff"/><circle cx="13.3" cy="4.8" r="4" fill="#44f494"/></svg>
        </header>
        <div class="titlebar"><h1>${t('Dashboard', 125)}</h1><div class="blank"></div></div>
        <div class="cards"><performance-card></performance-card><div class="right"><alerts-card></alerts-card><status-card></status-card></div></div>
        <div class="analytics"><machines-panel></machines-panel><overtime-panel></overtime-panel></div>
        <footer>
          <div>${t('Dolar', 35.5, 'cyr')}<div class="rate r1">${tri('#16d6d4', false)}${t('34,328.36 USD', 76)}${tri('#5a67ff', true)}${t('28,086.84 USD', 77)}</div>${t('Kraken: 31,207.60 USD', 116.5, 'kraken')}</div>
          <div>${t('EUR', 26.5, 'cyr')}<div class="rate r2">${tri('#16d6d4', false)}${t('1,029.54 USD', 69)}${tri('#5a67ff', true)}${t('842.35 USD', 60)}</div>${t('Kraken: 935.95 USD', 101, 'kraken')}</div>
        </footer>
      </div>
      <div class="note n1"></div><div class="note n2"></div><div class="note n3"></div><div class="note n31"></div><div class="note n4"></div><div class="note n5"></div>
      <span class="num m1">1</span><span class="num m2">2</span><span class="num m3">3</span><span class="num m31">3.1</span><span class="num m4">4</span><span class="num m5">5</span>`;
  }
}
